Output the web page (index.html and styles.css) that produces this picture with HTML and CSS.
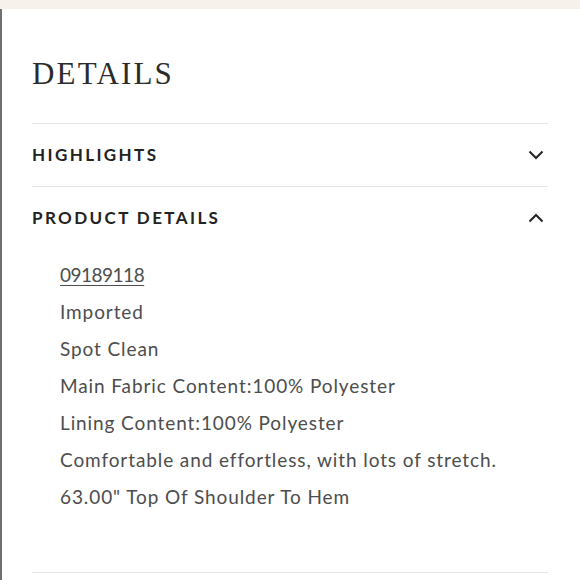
FILE: index.html
```html
<!DOCTYPE html>
<html>
<head>
<meta charset="utf-8">
<link rel="stylesheet" href="styles.css">
</head>
<body>
<div class="topbar"></div>
<main class="panel">
  <h1 class="title">DETAILS</h1>
  <section class="acc">
    <div class="acc-head">
      <span class="acc-label">HIGHLIGHTS</span>
      <svg class="chev" width="16" height="10" viewBox="0 0 16 10"><path d="M1.5 1.5 L8 8 L14.5 1.5" fill="none" stroke="#222" stroke-width="2"/></svg>
    </div>
  </section>
  <section class="acc open">
    <div class="acc-head">
      <span class="acc-label">PRODUCT DETAILS</span>
      <svg class="chev" width="16" height="10" viewBox="0 0 16 10"><path d="M1.5 8.5 L8 2 L14.5 8.5" fill="none" stroke="#222" stroke-width="2"/></svg>
    </div>
    <ul class="list">
      <li><a class="sku" href="#">09189118</a></li>
      <li>Imported</li>
      <li>Spot Clean</li>
      <li>Main Fabric Content:100% Polyester</li>
      <li>Lining Content:100% Polyester</li>
      <li>Comfortable and effortless, with lots of stretch.</li>
      <li>63.00" Top Of Shoulder To Hem</li>
    </ul>
  </section>
  <div class="end"></div>
</main>
</body>
</html>
```

FILE: styles.css
```css
html, body {
  margin: 0;
  padding: 0;
  background: #fff;
}
.topbar {
  height: 9px;
  background: #f6f2eb;
}
.panel {
  border-left: 2px solid #707070;
  padding: 0 32px 0 30px;
  height: 571px;
  box-sizing: border-box;
}
.title {
  margin: 0;
  padding: 45px 0 0 0;
  height: 114px;
  box-sizing: border-box;
  font-family: "Liberation Serif", serif;
  font-weight: normal;
  font-size: 31px;
  line-height: 40px;
  letter-spacing: 2.2px;
  color: #2b2b2b;
}
.acc {
  border-top: 1px solid #e4e4e4;
}
.acc-head {
  height: 62px;
  display: flex;
  align-items: center;
  justify-content: space-between;
}
.acc-label {
  font-family: "Lato", sans-serif;
  font-weight: 700;
  font-size: 17px;
  letter-spacing: 2.4px;
  color: #222;
  position: relative;
  top: -1px;
}
.chev {
  margin-right: 4px;
}
.list {
  list-style: none;
  margin: 0;
  padding: 7px 0 57px 28px;
  font-family: "Lato", sans-serif;
  font-size: 19px;
  line-height: 37px;
  letter-spacing: 0.9px;
  color: #4d4d4d;
}
.sku {
  color: #4d4d4d;
  letter-spacing: -0.5px;
  text-decoration: underline;
  text-underline-offset: 3px;
  text-decoration-thickness: 1px;
}
.end {
  border-top: 1px solid #e4e4e4;
}
```
